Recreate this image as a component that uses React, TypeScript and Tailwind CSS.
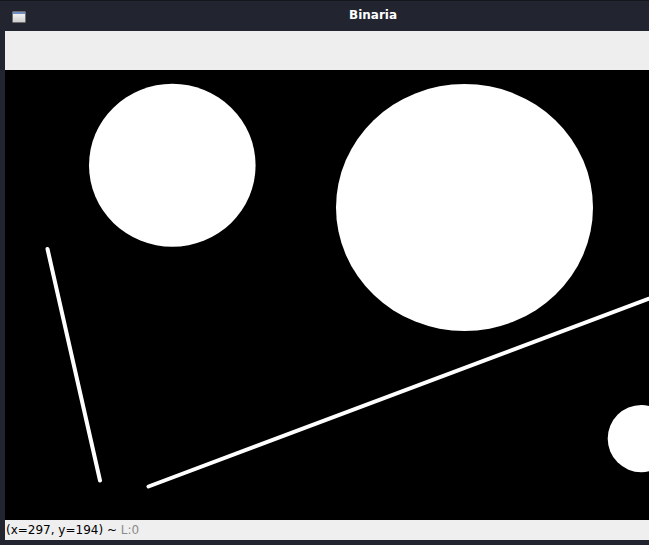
export default function App() {
  return (
    <div className="w-[649px] h-[545px] overflow-hidden bg-[#22252f] flex flex-col" style={{ fontFamily: '"DejaVu Sans", sans-serif' }}>
      {/* title bar */}
      <div className="h-[31px] shrink-0 border-t border-[#15171c] relative flex items-center">
        <div className="ml-[12px] mt-[1px] w-[14px] h-[12px] rounded-[1px] border border-[#6e6e6e] bg-gradient-to-b from-[#fafafa] to-[#cfcfcf] flex flex-col">
          <div className="h-[2px] bg-[#6f8fc4]" />
        </div>
        <div className="absolute left-[349px] top-[5px] text-[12px] font-bold text-white">Binaria</div>
      </div>
      <div className="flex-1 flex flex-col pl-[5px]">
        {/* toolbar */}
        <div className="h-[39px] shrink-0 bg-[#eeeeee]" />
        {/* canvas */}
        <div className="h-[450px] shrink-0 bg-black">
          <svg width="644" height="450" viewBox="5 70 644 450">
            <ellipse cx="172.3" cy="165.3" rx="83.3" ry="81.5" fill="white" />
            <ellipse cx="464.5" cy="207.5" rx="128.5" ry="123.5" fill="white" />
            <ellipse cx="641.3" cy="438.6" rx="33.6" ry="33.6" fill="white" />
            <line x1="47.5" y1="249" x2="100" y2="480.5" stroke="white" strokeWidth="4" strokeLinecap="round" />
            <line x1="148.5" y1="486.5" x2="700" y2="279.5" stroke="white" strokeWidth="4" strokeLinecap="round" />
          </svg>
        </div>
        {/* status bar */}
        <div className="h-[20px] shrink-0 bg-[#efefef] flex items-center pl-[1px] text-[12px] leading-none text-black whitespace-pre">
          <span>(x=297, y=194) ~ </span>
          <span className="text-[#8a8a8a]">L:0</span>
        </div>
      </div>
    </div>
  );
}
